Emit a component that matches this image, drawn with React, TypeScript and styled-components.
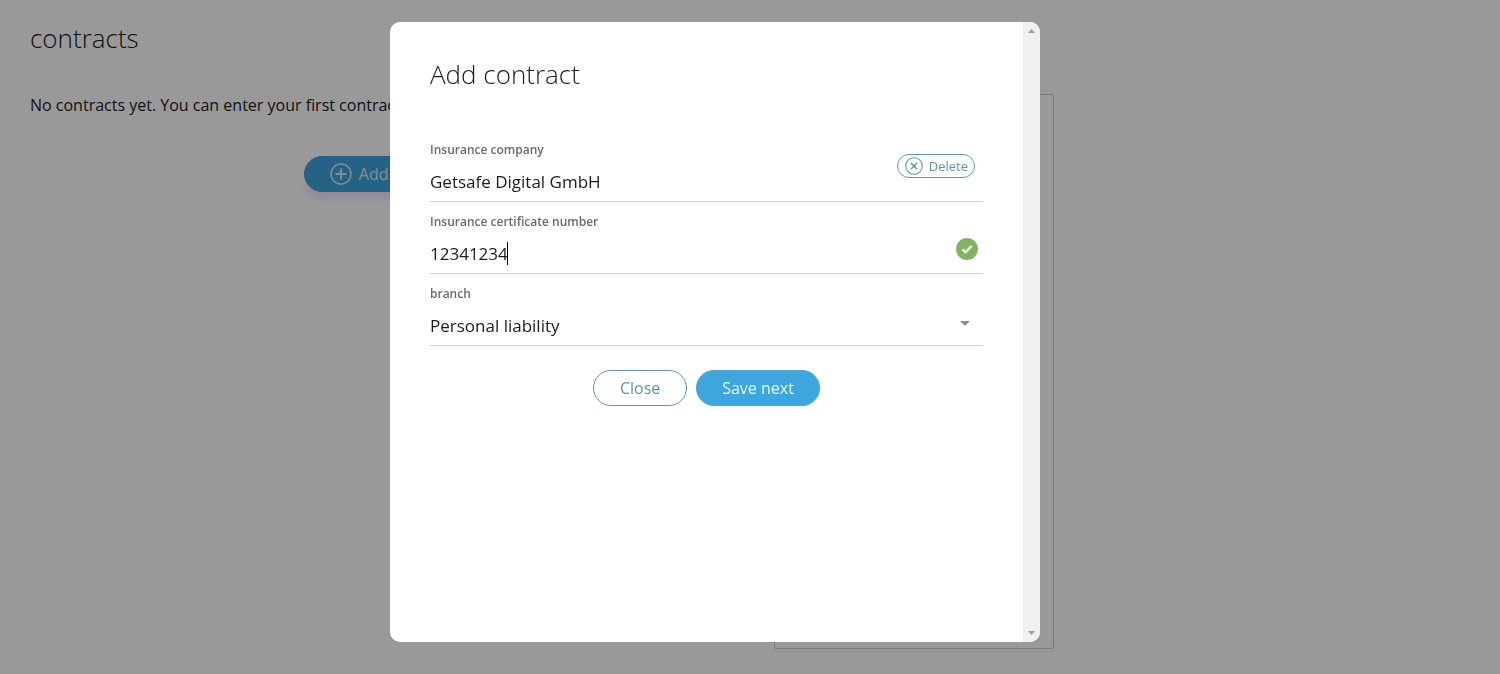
import React, { useState } from 'react';
import styled, { createGlobalStyle, css } from 'styled-components';

const GlobalStyle = createGlobalStyle`
  *, *::before, *::after { box-sizing: border-box; }
  body {
    margin: 0;
    background: #fff;
    color: #1c1c1c;
    font-family: "Open Sans", "Noto Sans", sans-serif;
    font-size: 16px;
    line-height: 24px;
  }
  button, input, select { font: inherit; color: inherit; }
`;

const Page = styled.div`
  display: flex;
  gap: 30px;
  max-width: 1084px;
  padding: 20px 30px 24px;
`;

const Main = styled.main`
  flex: 1;
  min-width: 0;
`;

const Title = styled.h1`
  margin: 0;
  font-size: 26px;
  font-weight: 300;
  line-height: 36px;
`;

const Intro = styled.p`
  margin: 37px 0 39px;
`;

const Centered = styled.div`
  display: flex;
  justify-content: center;
  padding-left: 10px;
`;

const Sidebar = styled.aside`
  flex: 0 0 280px;
  height: 555px;
  margin-top: 74px;
  border: 1px solid #cfcfcf;
  border-radius: 2px;
`;

const PillButton = styled.button<{ $primary?: boolean; $raised?: boolean }>`
  display: inline-flex;
  align-items: center;
  justify-content: center;
  gap: 7px;
  min-width: 94px;
  height: 36px;
  padding: 0 25px;
  border: 1px solid #6a93b0;
  border-radius: 18px;
  background: #fff;
  color: #5f93ad;
  white-space: nowrap;
  cursor: pointer;
  ${(p) =>
    p.$primary &&
    css`
      border-color: #5a9fc4;
      background: #3ea5df;
      color: #e0fffa;
      font-weight: 500;
      box-shadow: 0 0 4px #d8f7ff;
    `}
  ${(p) =>
    p.$raised &&
    css`
      border-color: #459fd0;
      color: #d8ecf8;
      box-shadow: 0 8px 8px -2px #ece4ff;
    `}
`;

const Overlay = styled.div`
  position: fixed;
  inset: 0;
  display: flex;
  justify-content: center;
  padding: 22px 70px 32px 0;
  background: rgba(0, 0, 0, 0.4);
`;

const Dialog = styled.section`
  display: flex;
  width: 100%;
  max-width: 650px;
  overflow: hidden;
  border-radius: 10px;
  background: #fff;
`;

const DialogBody = styled.div`
  flex: 1;
  min-width: 0;
  padding: 34px 40px;
`;

const DialogTitle = styled(Title).attrs({ as: 'h2' })`
  margin-bottom: 38px;
`;

const ScrollTrack = styled.div`
  display: flex;
  flex-direction: column;
  justify-content: space-between;
  width: 17px;
  background: #f0f0f0;
`;

const ScrollArrow = styled.svg`
  display: block;
  width: 17px;
  height: 17px;
  fill: #a0a0a0;
`;

const Field = styled.div`
  position: relative;
  display: flex;
  flex-direction: column;
  gap: 4px;
  height: 72px;
  padding-top: 11px;
  border-bottom: 1px solid #d2d2d2;
`;

const Label = styled.label`
  color: #6a6a6a;
  font-size: 12px;
  font-weight: 600;
  line-height: 18px;
`;

const control = css`
  width: 100%;
  padding: 0;
  border: 0;
  outline: 0;
  border-radius: 0;
  background: transparent;
  color: #1c1c1c;
  font-size: 17px;
`;

const TextInput = styled.input`
  ${control}
  height: 36px;
`;

const Select = styled.select`
  ${control}
  height: 38px;
  appearance: none;
`;

const Caret = styled.span`
  position: absolute;
  top: 40px;
  left: 77px;
  width: 1px;
  height: 23px;
  background: #000;
`;

const DeleteButton = styled.button`
  position: absolute;
  top: 24px;
  right: 8px;
  display: flex;
  align-items: center;
  gap: 6px;
  height: 24px;
  padding: 0 6px 0 7px;
  border: 1px solid #6594ae;
  border-radius: 12px;
  background: #fcffff;
  color: #6594ae;
  font-size: 13px;
  line-height: 18px;
  cursor: pointer;
`;

const ValidMark = styled.svg`
  position: absolute;
  top: 36px;
  right: 5px;
  width: 22px;
  height: 22px;
`;

const SelectArrow = styled.svg`
  position: absolute;
  top: 47px;
  right: 13px;
  width: 10px;
  height: 5px;
  fill: #8f8f8f;
  pointer-events: none;
`;

const Actions = styled.div`
  display: flex;
  justify-content: center;
  gap: 9px;
  margin-top: 24px;
`;

function PlusCircle() {
  return (
    <svg width="22" height="22" viewBox="0 0 22 22" fill="none" stroke="currentColor" strokeWidth="1.5" aria-hidden="true">
      <circle cx="11" cy="11" r="10" />
      <path d="M11 5.5v11M5.5 11h11" strokeWidth="2" />
    </svg>
  );
}

function CrossCircle() {
  return (
    <svg width="18" height="18" viewBox="0 0 18 18" fill="none" stroke="currentColor" aria-hidden="true">
      <circle cx="9" cy="9" r="8.3" strokeWidth="1.1" />
      <path d="M6 6l6 6M12 6l-6 6" strokeWidth="1.5" />
    </svg>
  );
}

export default function App() {
  const [company, setCompany] = useState('Getsafe Digital GmbH');
  const [certificate, setCertificate] = useState('12341234');

  return (
    <>
      <GlobalStyle />
      <Page>
        <Main>
          <Title>contracts</Title>
          <Intro>No contracts yet. You can enter your first contract here.</Intro>
          <Centered>
            <PillButton type="button" $primary $raised>
              <PlusCircle />
              Add contract
            </PillButton>
          </Centered>
        </Main>
        <Sidebar />
      </Page>

      <Overlay>
        <Dialog role="dialog" aria-modal="true" aria-labelledby="dialog-title">
          <DialogBody>
            <DialogTitle id="dialog-title">Add contract</DialogTitle>
            <form onSubmit={(e) => e.preventDefault()}>
              <Field>
                <Label htmlFor="company">Insurance company</Label>
                <TextInput id="company" value={company} onChange={(e) => setCompany(e.target.value)} />
                <DeleteButton type="button" onClick={() => setCompany('')}>
                  <CrossCircle />
                  Delete
                </DeleteButton>
              </Field>
              <Field>
                <Label htmlFor="certificate">Insurance certificate number</Label>
                <TextInput id="certificate" value={certificate} onChange={(e) => setCertificate(e.target.value)} />
                <Caret />
                <ValidMark viewBox="0 0 22 22" aria-hidden="true">
                  <circle cx="11" cy="11" r="11" fill="#84b168" />
                  <path d="M6.5 11.3l3 3 6-6.3" fill="none" stroke="#edffe0" strokeWidth="2.4" />
                </ValidMark>
              </Field>
              <Field>
                <Label htmlFor="branch">branch</Label>
                <Select id="branch" defaultValue="liability">
                  <option value="liability">Personal liability</option>
                </Select>
                <SelectArrow viewBox="0 0 10 5" aria-hidden="true">
                  <path d="M0 0h10L5 5z" />
                </SelectArrow>
              </Field>
              <Actions>
                <PillButton type="button">Close</PillButton>
                <PillButton type="submit" $primary>Save next</PillButton>
              </Actions>
            </form>
          </DialogBody>
          <ScrollTrack aria-hidden="true">
            <ScrollArrow viewBox="0 0 17 17">
              <path d="M5 11h7L8.500 7z" />
            </ScrollArrow>
            <ScrollArrow viewBox="0 0 17 17">
              <path d="M5 6h7L8.500 10z" />
            </ScrollArrow>
          </ScrollTrack>
        </Dialog>
      </Overlay>
    </>
  );
}
